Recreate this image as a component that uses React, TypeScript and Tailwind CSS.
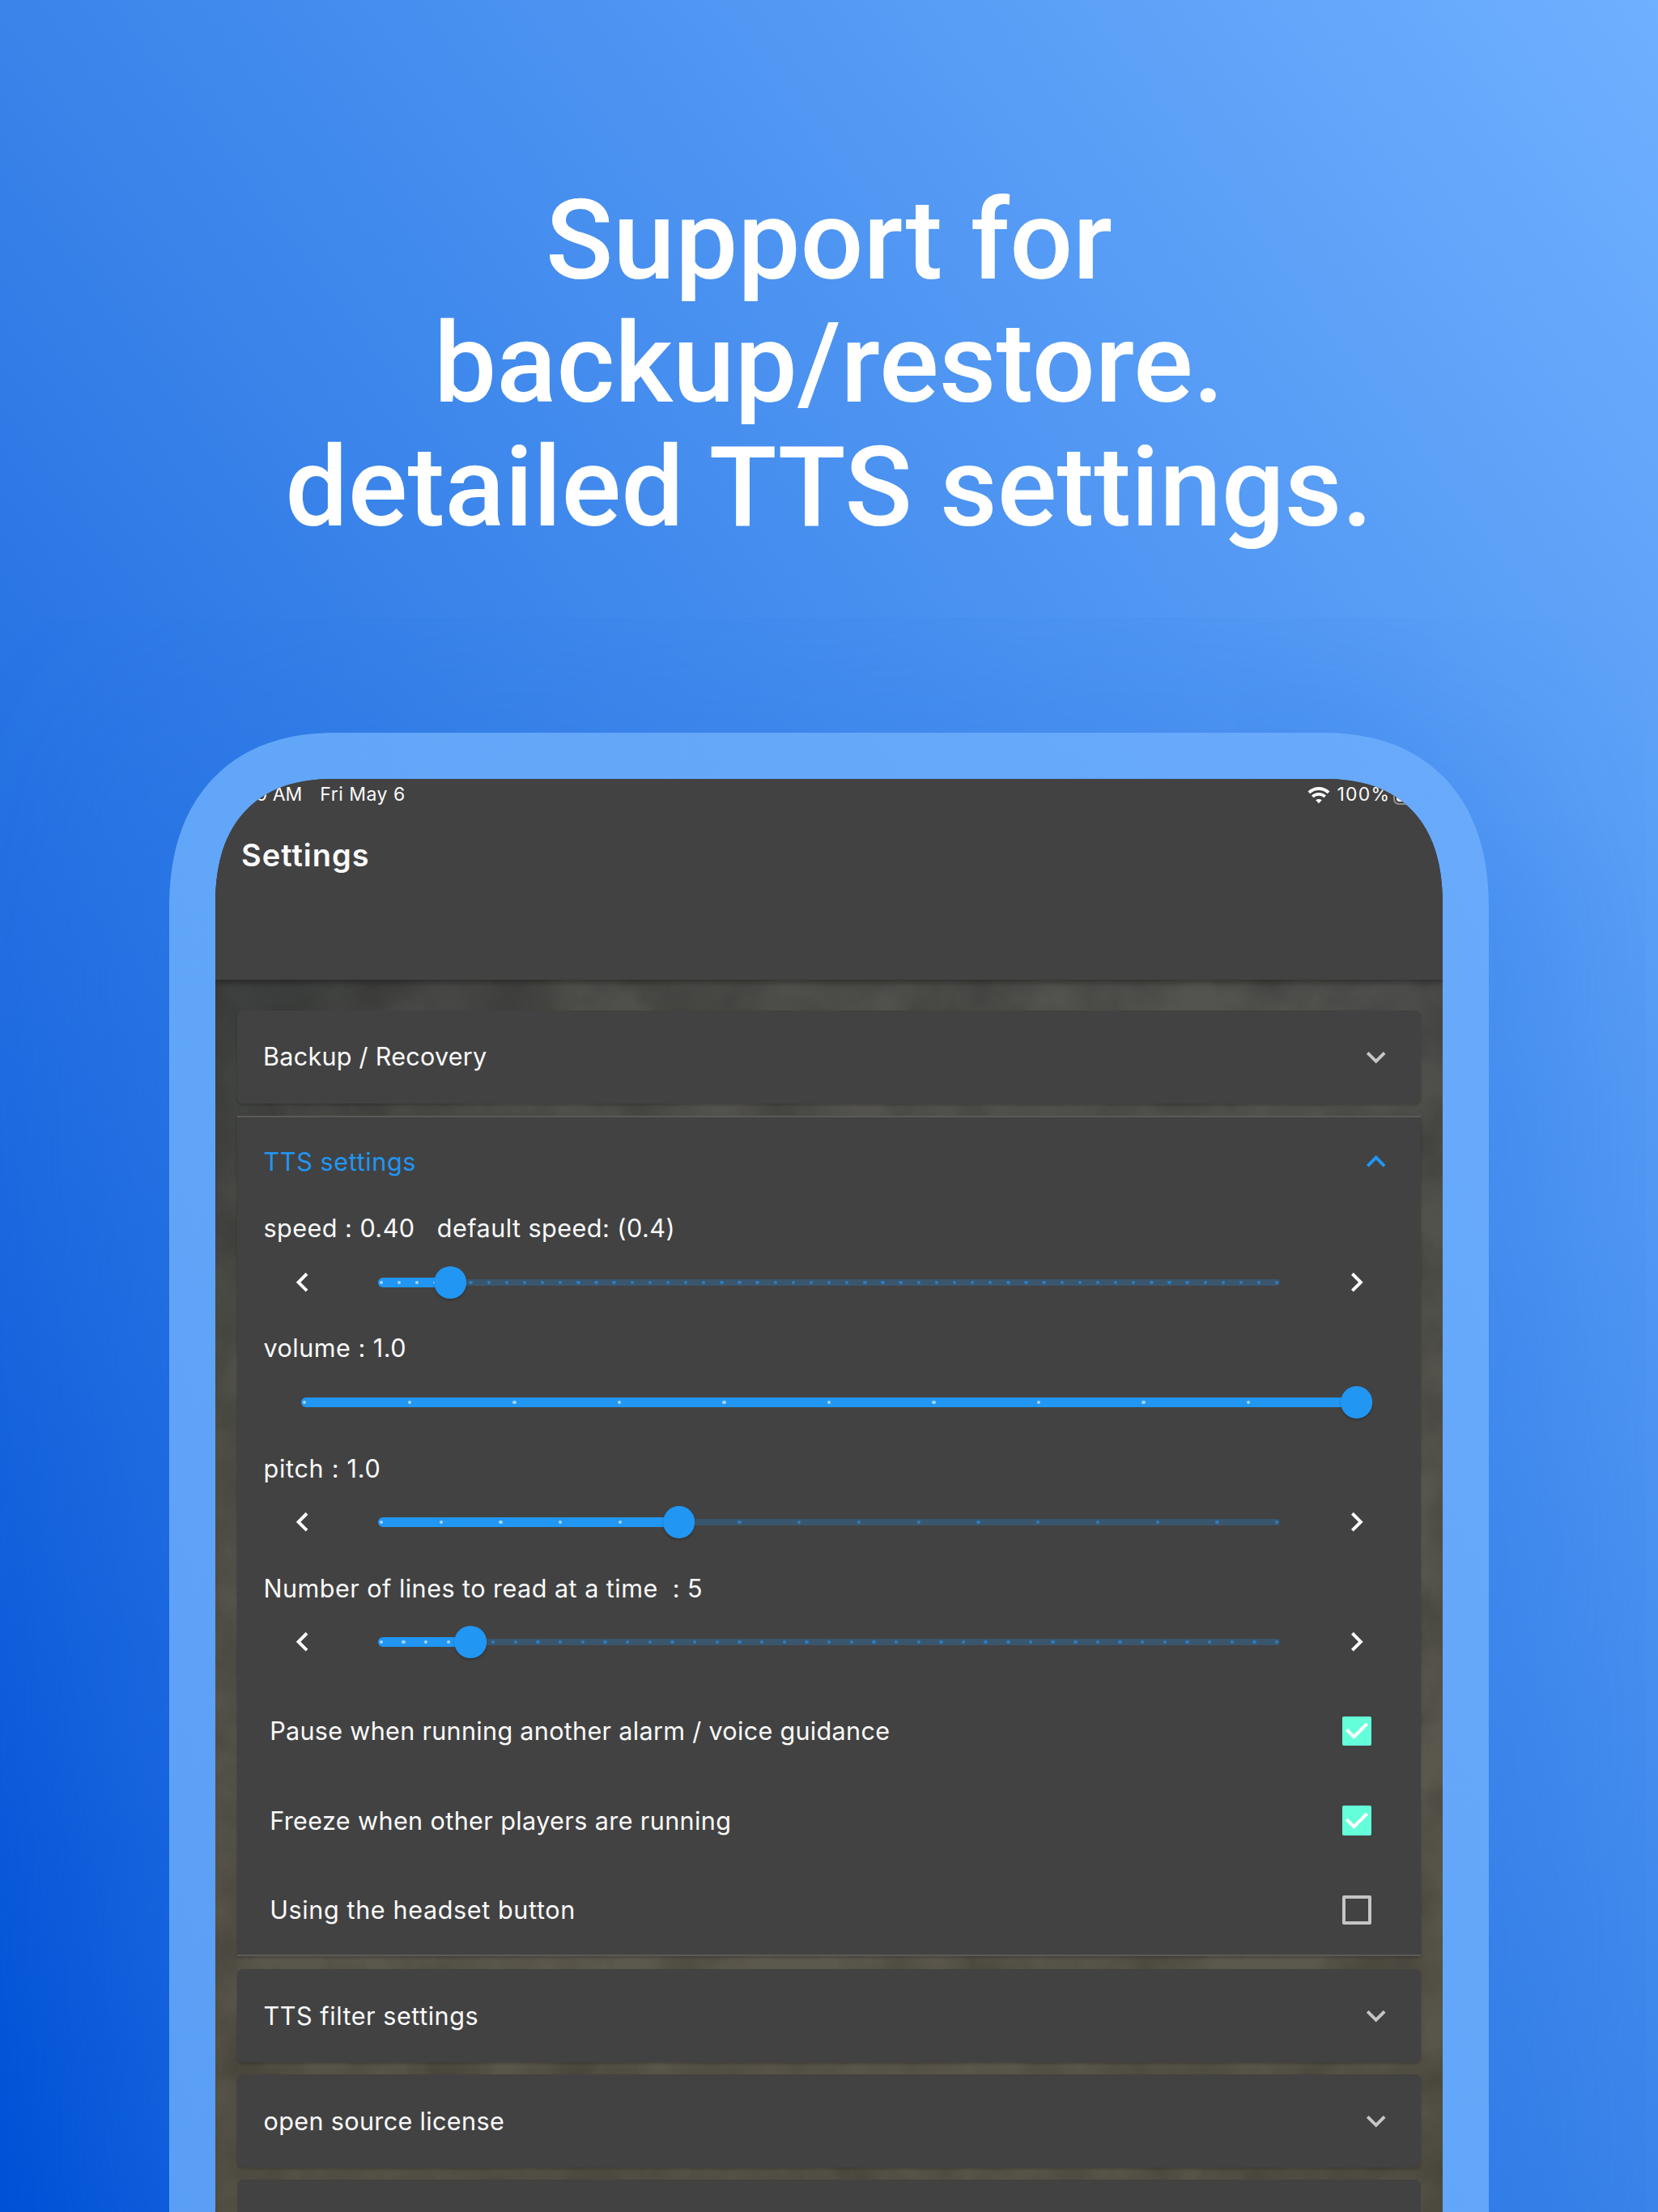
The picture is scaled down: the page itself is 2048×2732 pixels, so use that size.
import React from "react";

type IconProps = { className?: string };

function ChevronDown({ className = "" }: IconProps) {
  return (
    <svg viewBox="0 0 24 24" fill="currentColor" className={`size-[47.4px] ${className}`}>
      <path d="M16.59 8.59 12 13.17 7.41 8.59 6 10l6 6 6-6z" />
    </svg>
  );
}

function ChevronUp({ className = "" }: IconProps) {
  return (
    <svg viewBox="0 0 24 24" fill="currentColor" className={`size-[47.4px] ${className}`}>
      <path d="M12 8l-6 6 1.41 1.41L12 10.83l4.59 4.58L18 14z" />
    </svg>
  );
}

function StepArrow({ direction }: { direction: "left" | "right" }) {
  return (
    <button className="grid w-[94.8px] shrink-0 place-items-center text-white">
      <svg viewBox="0 0 24 24" fill="currentColor" className="size-[47.4px]">
        {direction === "left" ? (
          <path d="M15.9 7.41 14.5 6l-6 6 6 6 1.41-1.41L11.32 12z" />
        ) : (
          <path d="M10.02 6 8.61 7.41 13.19 12l-4.58 4.59L10.02 18l6-6z" />
        )}
      </svg>
    </button>
  );
}

function WifiIcon() {
  return (
    <svg viewBox="0 0 28 22" className="h-[22px] w-[28px]" fill="none" stroke="currentColor">
      <path d="M1.9 7.9C8.6 1.3 19.4 1.3 26.1 7.9" strokeWidth="3.9" />
      <path d="M6.3 12.9C10.5 8.9 17.5 8.9 21.7 12.9" strokeWidth="3.7" />
      <path d="M14 21.2l-3.8-3.9c2.1-1.9 5.5-1.9 7.6 0z" fill="currentColor" stroke="none" />
    </svg>
  );
}

function BatteryIcon() {
  return (
    <div className="flex h-[24px] w-[50px] items-stretch rounded-[7px] border-2 border-white/40 p-[2px]">
      <div className="flex-1 rounded-[4px] bg-white" />
    </div>
  );
}

type SliderProps = { fraction: number; divisions: number };

function Slider({ fraction, divisions }: SliderProps) {
  const ticks = Array.from({ length: divisions + 1 }, (_, i) => i / divisions);
  return (
    <div className="relative flex h-[12px] flex-1 items-center">
      <div className="h-[8px] w-full rounded-full bg-[#3a566d]" />
      <div
        className="absolute left-0 h-[12px] rounded-full bg-[#2196f3]"
        style={{ width: `${fraction * 100}%` }}
      />
      <div className="absolute inset-x-[1.5px] flex justify-between">
        {ticks.map((t) => (
          <span
            key={t}
            className={
              t <= fraction
                ? "size-[4.4px] rounded-full bg-[#a6d5fa]"
                : "size-[4.4px] rounded-full bg-[#2c7dbf]"
            }
          />
        ))}
      </div>
      <div
        className="absolute size-[39.6px] -translate-x-1/2 rounded-full bg-[#2196f3] shadow-[0_2px_3px_rgba(0,0,0,0.22)]"
        style={{ left: `${fraction * 100}%` }}
      />
    </div>
  );
}

type SettingProps = SliderProps & { label: string; tracking: string; stepper?: boolean };

function SliderSetting({ label, tracking, stepper = true, ...slider }: SettingProps) {
  return (
    <div className="mb-[15.1px] flex flex-col">
      <p className={`h-[54px] whitespace-pre pl-[32px] leading-[53.4px] ${tracking}`}>{label}</p>
      {stepper ? (
        <div className="flex h-[79px] items-center pl-[31.4px] pr-[31.9px]">
          <StepArrow direction="left" />
          <div className="flex flex-1 pl-[47.6px] pr-[47.2px]">
            <Slider {...slider} />
          </div>
          <StepArrow direction="right" />
        </div>
      ) : (
        <div className="flex h-[79px] items-center pl-[79px] pr-[79.3px]">
          <Slider {...slider} />
        </div>
      )}
    </div>
  );
}

type CheckProps = { label: string; tracking: string; checked?: boolean };

function CheckSetting({ label, tracking, checked = false }: CheckProps) {
  return (
    <div className="flex h-[110.5px] items-center justify-between pl-[39.7px] pr-[61.2px]">
      <span className={tracking}>{label}</span>
      {checked ? (
        <span className="grid size-[36.2px] place-items-center rounded-[2px] bg-[#64ffda]">
          <svg viewBox="0 0 18 18" className="size-[36px]" fill="none" stroke="#fff" strokeWidth="2">
            <path d="M2.7 8.1 7.2 12.6 15.3 4.5" />
          </svg>
        </span>
      ) : (
        <span className="size-[36.2px] rounded-[2px] border-4 border-[#c5c5c5]" />
      )}
    </div>
  );
}

function CollapsedCard({ title, tracking, origin }: { title: string; tracking: string; origin: string }) {
  return (
    <section
      className={`mb-[15.2px] flex h-[114.8px] shrink-0 items-center justify-between rounded-[7px] bg-[#424242] pr-[32px] shadow-[0_2px_3px_rgba(0,0,0,0.2)] ${origin}`}
    >
      <h2 className={tracking}>{title}</h2>
      <ChevronDown className="text-[#c6c6c6]" />
    </section>
  );
}

export default function App() {
  return (
    <main className="flex h-[2732px] w-[2048px] flex-col items-center overflow-hidden bg-[linear-gradient(to_top_right,#0050d6_0%,#3a84ea_50%,#6fb0ff_100%)]">
      <h1 className="h-[904.6px] shrink-0 whitespace-pre pt-[220.5px] text-center font-['Roboto',sans-serif] text-[137.6px] leading-[152.7px] font-medium text-white">
        {"Support for\nbackup/restore.\ndetailed TTS settings."}
      </h1>

      <div className="h-[2200px] w-[1629.4px] shrink-0 rounded-[207px/218px] bg-[linear-gradient(to_top_right,#589df4,#60a5f8_40%,#69aafb)] p-[57px] shadow-[0_40px_250px_rgba(44,120,229,0.75)] [corner-shape:superellipse(1.2)]">
        <div className="relative flex size-full flex-col overflow-hidden rounded-[149px/158px] bg-[linear-gradient(97deg,#3a3d3c_0%,#4e4e4b_25%,#535350_75%,#454745_100%)] font-['Inter',sans-serif] text-[30.6px] text-[#fafafa] [corner-shape:superellipse(1.27)]">
          <div className="absolute inset-0 bg-[linear-gradient(to_bottom,transparent_12%,rgba(96,94,82,0.6)_40%,rgba(98,93,80,0.75)_65%,rgba(90,85,70,0.75)_85%)]" />
          <svg className="absolute inset-0 size-full opacity-[0.17]">
            <filter id="grain">
              <feTurbulence type="fractalNoise" baseFrequency="0.012 0.012" numOctaves="6" seed="4" />
              <feColorMatrix values="0 0 0 0 0  0 0 0 0 0  0 0 0 0 0  2 0 0 0 -0.6" />
            </filter>
            <rect width="100%" height="100%" filter="url(#grain)" />
          </svg>

          <header className="relative flex h-[248.3px] shrink-0 flex-col bg-[#424242] shadow-[0_3px_8px_rgba(0,0,0,0.4)]">
            <div className="flex h-[40px] items-center justify-between pl-[43px] pr-[10.5px] text-[23px]">
              <div className="flex items-center">
                <span className="w-[64px] text-right whitespace-nowrap">0 AM</span>
                <span className="ml-[22px] tracking-[0.5px]">Fri May 6</span>
              </div>
              <div className="flex items-center">
                <WifiIcon />
                <span className="ml-[8px] tracking-[1.2px]">100%</span>
                <span className="ml-[4px]">
                  <BatteryIcon />
                </span>
              </div>
            </div>
            <p className="pl-[31.7px] pt-[30px] text-[38px] leading-[48px] font-[560] tracking-[1px]">
              Settings
            </p>
          </header>

          <div className="relative flex flex-col pl-[27.2px] pr-[26.8px] pt-[38px]">
            <CollapsedCard title="Backup / Recovery" tracking="tracking-[0.23px]" origin="pl-[31.6px]" />

            <section className="mb-[16px] flex shrink-0 flex-col border-y-2 border-[#5a5b59] bg-[#424242] bg-clip-padding shadow-[0_2px_3px_rgba(0,0,0,0.2)]">
              <div className="flex h-[110.5px] items-center justify-between pl-[32px] pr-[32px] text-[#2196f3]">
                <h2 className="tracking-[0.6px]">TTS settings</h2>
                <ChevronUp />
              </div>
              <SliderSetting label="speed : 0.40   default speed: (0.4)" tracking="tracking-[0.45px]" fraction={0.08} divisions={50} />
              <SliderSetting label="volume : 1.0" tracking="tracking-[0.47px]" fraction={1} divisions={10} stepper={false} />
              <SliderSetting label="pitch : 1.0" tracking="tracking-[0.7px]" fraction={1 / 3} divisions={15} />
              <SliderSetting label="Number of lines to read at a time  : 5" tracking="tracking-[0.45px]" fraction={4 / 39} divisions={40} />
              <CheckSetting label="Pause when running another alarm / voice guidance" tracking="tracking-[0.29px]" checked />
              <CheckSetting label="Freeze when other players are running" tracking="tracking-[0.37px]" checked />
              <CheckSetting label="Using the headset button" tracking="tracking-[0.6px]" />
            </section>

            <CollapsedCard title="TTS filter settings" tracking="tracking-[0.53px]" origin="pl-[32px]" />
            <CollapsedCard title="open source license" tracking="tracking-[0.33px]" origin="pl-[32px]" />
            <section className="h-[114.8px] rounded-[7px] bg-[#424242]" />
          </div>
        </div>
      </div>
    </main>
  );
}
